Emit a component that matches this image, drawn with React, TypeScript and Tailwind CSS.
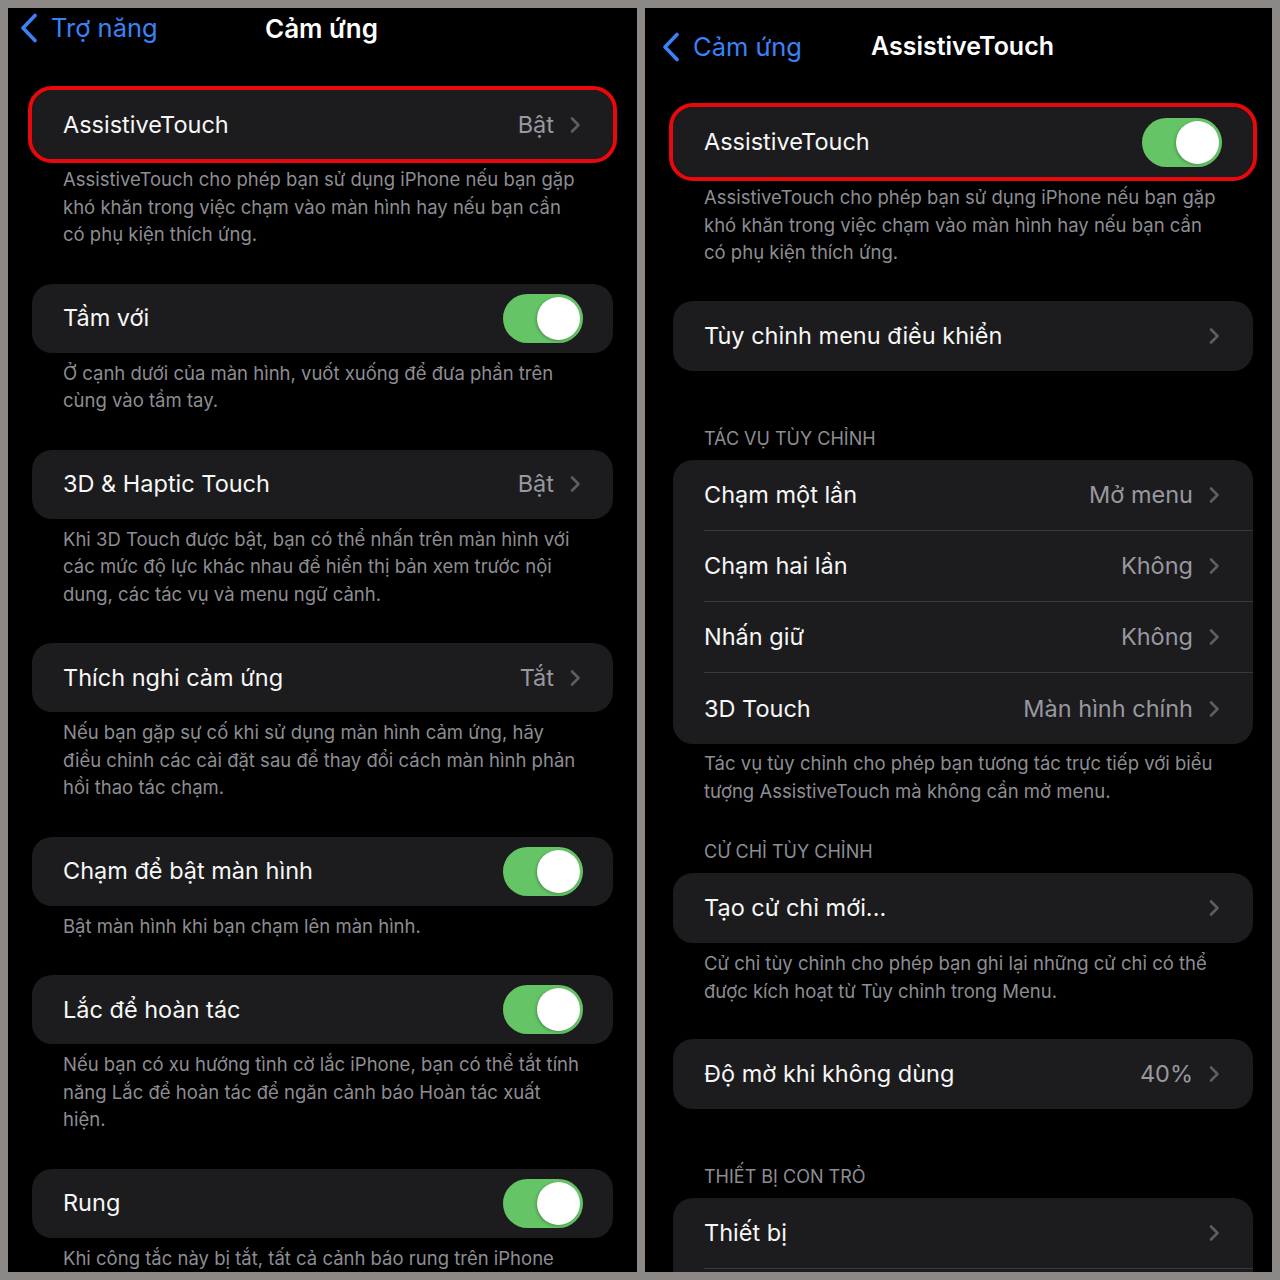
import React from "react";

const FONT = { fontFamily: "Inter, 'Noto Sans', sans-serif" };

function Chevron() {
  return (
    <svg width="11" height="18" viewBox="0 0 11 18" className="shrink-0">
      <path d="M2 2.5l6.5 6.5L2 15.5" stroke="#5d5d62" strokeWidth="2.6" fill="none" strokeLinecap="round" strokeLinejoin="round" />
    </svg>
  );
}

function BackChevron() {
  return (
    <svg width="20" height="30" viewBox="0 0 20 30" className="shrink-0">
      <path d="M16 2.5L4 15l12 12.5" stroke="#3a82f7" strokeWidth="3.6" fill="none" strokeLinecap="round" strokeLinejoin="round" />
    </svg>
  );
}

function Toggle() {
  return (
    <div className="w-[80px] h-[49px] rounded-full bg-[#65c466] p-[3px] flex justify-end shrink-0">
      <div className="w-[43px] h-[43px] rounded-full bg-white shadow-[-1px_1px_3px_rgba(0,0,0,0.25)]" />
    </div>
  );
}

function RowContent({ label, value, toggle, chevron }: { label: string; value?: string; toggle?: boolean; chevron?: boolean }) {
  return (
    <>
      <div className="flex-1 text-[23.5px] text-[#f7f7f7] whitespace-nowrap">{label}</div>
      {value && <div className="text-[23.5px] text-[#98989e] mr-[16px] whitespace-nowrap">{value}</div>}
      {toggle && <Toggle />}
      {chevron && <Chevron />}
    </>
  );
}

function Card({ children, red }: { children: React.ReactNode; red?: boolean }) {
  return (
    <div className="relative">
      <div className="bg-[#1c1c1e] rounded-[20px] overflow-hidden">{children}</div>
      {red && <div className="absolute -inset-[4px] rounded-[24px] border-[4px] border-[#e8090c]" />}
    </div>
  );
}

function Footer({ lines, pt = "pt-[7px]", pb }: { lines: string[]; pt?: string; pb: string }) {
  return (
    <div className={`pl-[31px] ${pt} ${pb} text-[18.5px] leading-[27.5px] text-[#8d8d93]`}>
      {lines.map((l, i) => (
        <div key={i} className="whitespace-nowrap">{l}</div>
      ))}
    </div>
  );
}

function Header({ text, pt }: { text: string; pt: string }) {
  return (
    <div className={`pl-[31px] ${pt} pb-[10px] text-[18px] leading-[22px] text-[#8d8d93] uppercase whitespace-nowrap`}>{text}</div>
  );
}

function LeftRow(p: { label: string; value?: string; toggle?: boolean; chevron?: boolean }) {
  return (
    <div className={`flex items-center h-[69px] pl-[31px] ${p.toggle ? "pr-[30px]" : "pr-[32px]"}`}>
      <RowContent {...p} />
    </div>
  );
}

function RightRow(p: { label: string; value?: string; toggle?: boolean; chevron?: boolean; h?: string; sep?: boolean }) {
  return (
    <div className="pl-[31px]">
      <div className={`flex items-center ${p.h ?? "h-[70px]"} ${p.toggle ? "pr-[31px]" : "pr-[33px]"} ${p.sep ? "border-b border-[#38383a]" : ""}`}>
        <RowContent label={p.label} value={p.value} toggle={p.toggle} chevron={p.chevron} />
      </div>
    </div>
  );
}

function LeftPanel() {
  return (
    <div className="w-[629px] h-[1264px] bg-black overflow-hidden shrink-0">
      <div className="h-[40px] grid grid-cols-[1fr_auto_1fr] items-center pl-[11px] pr-[13px]">
        <div className="flex items-center gap-[12px]">
          <BackChevron />
          <span className="text-[25.5px] text-[#3a82f7]">Trợ năng</span>
        </div>
        <div className="text-[26px] font-semibold text-white">Cảm ứng</div>
        <div />
      </div>
      <div className="pt-[42px] px-[24px]">
        <Card red>
          <LeftRow label="AssistiveTouch" value="Bật" chevron />
        </Card>
        <Footer pb="pb-[35px]" lines={[
          "AssistiveTouch cho phép bạn sử dụng iPhone nếu bạn gặp",
          "khó khăn trong việc chạm vào màn hình hay nếu bạn cần",
          "có phụ kiện thích ứng.",
        ]} />
        <Card>
          <LeftRow label="Tầm với" toggle />
        </Card>
        <Footer pb="pb-[35px]" lines={[
          "Ở cạnh dưới của màn hình, vuốt xuống để đưa phần trên",
          "cùng vào tầm tay.",
        ]} />
        <Card>
          <LeftRow label="3D & Haptic Touch" value="Bật" chevron />
        </Card>
        <Footer pb="pb-[35px]" lines={[
          "Khi 3D Touch được bật, bạn có thể nhấn trên màn hình với",
          "các mức độ lực khác nhau để hiển thị bản xem trước nội",
          "dung, các tác vụ và menu ngữ cảnh.",
        ]} />
        <Card>
          <LeftRow label="Thích nghi cảm ứng" value="Tắt" chevron />
        </Card>
        <Footer pb="pb-[35px]" lines={[
          "Nếu bạn gặp sự cố khi sử dụng màn hình cảm ứng, hãy",
          "điều chỉnh các cài đặt sau để thay đổi cách màn hình phản",
          "hồi thao tác chạm.",
        ]} />
        <Card>
          <LeftRow label="Chạm để bật màn hình" toggle />
        </Card>
        <Footer pb="pb-[35px]" lines={["Bật màn hình khi bạn chạm lên màn hình."]} />
        <Card>
          <LeftRow label="Lắc để hoàn tác" toggle />
        </Card>
        <Footer pb="pb-[35px]" lines={[
          "Nếu bạn có xu hướng tình cờ lắc iPhone, bạn có thể tắt tính",
          "năng Lắc để hoàn tác để ngăn cảnh báo Hoàn tác xuất",
          "hiện.",
        ]} />
        <Card>
          <LeftRow label="Rung" toggle />
        </Card>
        <Footer pb="pb-[35px]" lines={["Khi công tắc này bị tắt, tất cả cảnh báo rung trên iPhone"]} />
      </div>
    </div>
  );
}

function RightPanel() {
  return (
    <div className="w-[627px] h-[1264px] bg-black overflow-hidden shrink-0">
      <div className="h-[78px] grid grid-cols-[1fr_auto_1fr] items-center pl-[16px] pr-[8px]">
        <div className="flex items-center gap-[12px]">
          <BackChevron />
          <span className="text-[25.5px] text-[#3a82f7]">Cảm ứng</span>
        </div>
        <div className="text-[25px] font-semibold text-white">AssistiveTouch</div>
        <div />
      </div>
      <div className="pt-[21px] pl-[28px] pr-[19px]">
        <Card red>
          <RightRow label="AssistiveTouch" toggle />
        </Card>
        <Footer pb="pb-[34.5px]" lines={[
          "AssistiveTouch cho phép bạn sử dụng iPhone nếu bạn gặp",
          "khó khăn trong việc chạm vào màn hình hay nếu bạn cần",
          "có phụ kiện thích ứng.",
        ]} />
        <Card>
          <RightRow label="Tùy chỉnh menu điều khiển" chevron />
        </Card>
        <Header text="Tác vụ tùy chỉnh" pt="pt-[57px]" />
        <Card>
          <RightRow label="Chạm một lần" value="Mở menu" chevron h="h-[71px]" sep />
          <RightRow label="Chạm hai lần" value="Không" chevron h="h-[71px]" sep />
          <RightRow label="Nhấn giữ" value="Không" chevron h="h-[71px]" sep />
          <RightRow label="3D Touch" value="Màn hình chính" chevron h="h-[71px]" />
        </Card>
        <Footer pt="pt-[6px]" pb="pb-0" lines={[
          "Tác vụ tùy chỉnh cho phép bạn tương tác trực tiếp với biểu",
          "tượng AssistiveTouch mà không cần mở menu.",
        ]} />
        <Header text="Cử chỉ tùy chỉnh" pt="pt-[36px]" />
        <Card>
          <RightRow label="Tạo cử chỉ mới..." chevron />
        </Card>
        <Footer pb="pb-[34px]" lines={[
          "Cử chỉ tùy chỉnh cho phép bạn ghi lại những cử chỉ có thể",
          "được kích hoạt từ Tùy chỉnh trong Menu.",
        ]} />
        <Card>
          <RightRow label="Độ mờ khi không dùng" value="40%" chevron />
        </Card>
        <Header text="Thiết bị con trỏ" pt="pt-[57px]" />
        <Card>
          <RightRow label="Thiết bị" chevron h="h-[71px]" sep />
          <div className="h-[71px]" />
        </Card>
      </div>
    </div>
  );
}

export default function App() {
  return (
    <div className="w-[1280px] h-[1280px] bg-[#8b8885] p-[8px] flex gap-[8px] overflow-hidden" style={FONT}>
      <LeftPanel />
      <RightPanel />
    </div>
  );
}
